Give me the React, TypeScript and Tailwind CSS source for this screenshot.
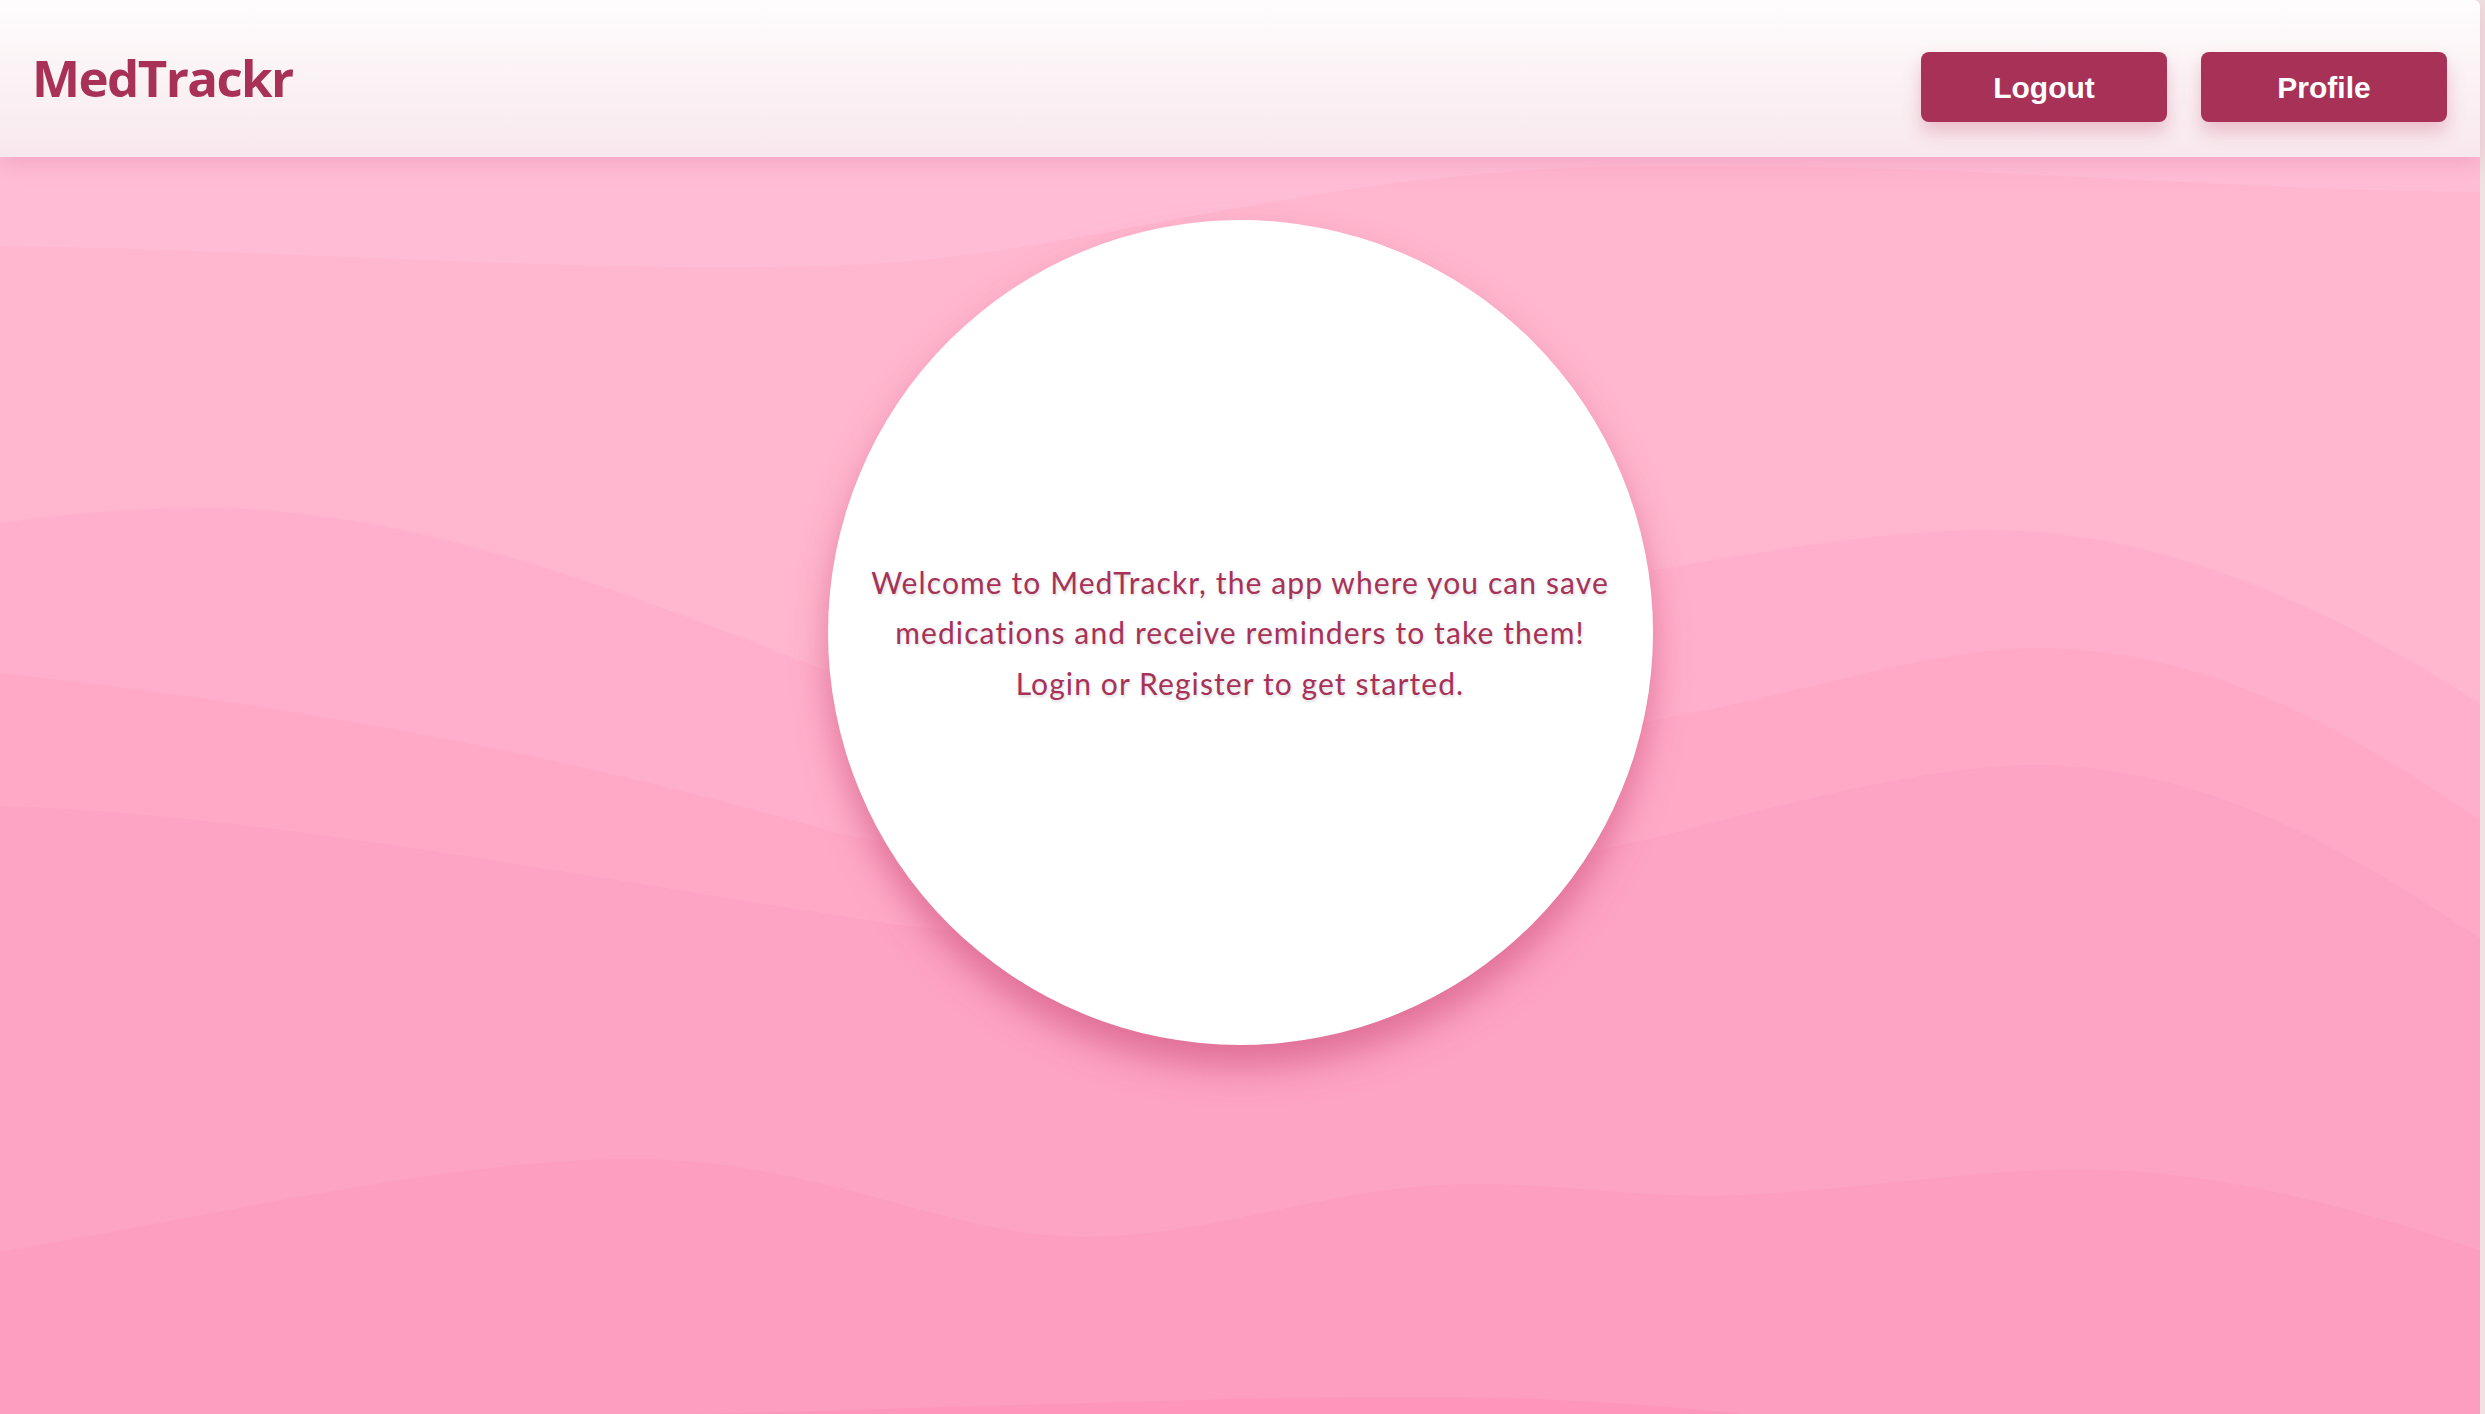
export default function App() {
  return (
    <div className="flex w-full h-[1414px] overflow-hidden bg-[#efe2e2]">
      <div className="flex flex-col w-[2480px] h-full">
        {/* Header */}
        <header className="relative z-10 h-[157px] shrink-0 flex justify-between items-center pl-[32px] pr-[33px] bg-gradient-to-b from-[#fefdfd] to-[#f8e8ed] shadow-[0_6px_22px_rgba(220,120,160,0.35)] rounded-tr-[6px]">
          <h1 className="text-[51px] font-bold text-[#a83257] tracking-[-1.6px] [font-family:'Open_Sans',sans-serif] -mt-[2px]">
            MedTrackr
          </h1>
          <div className="flex gap-[34px] mt-[17px]">
            <button className="w-[246px] h-[70px] rounded-[8px] bg-[#a83257] text-white text-[30px] font-bold [font-family:'Liberation_Sans',Arial,sans-serif] shadow-[0_10px_18px_rgba(200,80,120,0.3)]">
              Logout
            </button>
            <button className="w-[246px] h-[70px] rounded-[8px] bg-[#a83257] text-white text-[30px] font-bold [font-family:'Liberation_Sans',Arial,sans-serif] shadow-[0_10px_18px_rgba(200,80,120,0.3)]">
              Profile
            </button>
          </div>
        </header>

        {/* Main */}
        <main className="relative flex-1 flex justify-center pt-[63px] bg-[#ffbdd5]">
          <svg
            className="absolute inset-0 w-full h-full"
            viewBox="0 157 2480 1257"
            preserveAspectRatio="none"
          >
            <path
              d="M0,246 C300,250 600,275 850,265 C1100,255 1300,168 1650,166 C2000,164 2200,190 2480,192 L2480,1414 L0,1414 Z"
              fill="#ffb6ce"
            />
            <path
              d="M0,523 C80,512 150,507 220,508 C420,512 620,590 830,672 C1100,760 1400,610 1650,571 C1800,545 1900,530 1990,530 C2180,532 2350,620 2480,704 L2480,1414 L0,1414 Z"
              fill="#ffafcb"
            />
            <path
              d="M0,673 C200,695 500,735 830,831 C1100,900 1400,760 1650,721 C1800,695 1930,648 2040,648 C2220,650 2360,740 2480,820 L2480,1414 L0,1414 Z"
              fill="#ffa9c7"
            />
            <path
              d="M0,806 C250,812 600,880 900,925 C1200,960 1450,880 1650,839 C1800,800 1930,765 2040,765 C2220,768 2360,860 2480,938 L2480,1414 L0,1414 Z"
              fill="#fda3c3"
            />
            <path
              d="M0,1252 C220,1215 450,1159 634,1159 C820,1160 950,1237 1082,1237 C1220,1237 1330,1184 1474,1184 C1570,1184 1650,1200 1743,1195 C1880,1188 1980,1168 2092,1170 C2250,1172 2400,1225 2480,1250 L2480,1414 L0,1414 Z"
              fill="#fd9dbf"
            />
            <path
              d="M697,1414 C900,1410 1200,1397 1410,1397 C1560,1397 1650,1405 1743,1414 Z"
              fill="#fd96ba"
            />
          </svg>

          <div className="relative w-[825px] h-[825px] rounded-full bg-white flex items-center justify-center text-center shadow-[0_22px_34px_rgba(200,70,115,0.55)]">
            <p className="text-[30px] leading-[50.5px] tracking-[1.1px] text-[#a83257] [font-family:Lato,sans-serif] [text-shadow:1px_2px_3px_rgba(0,0,0,0.15)]">
              Welcome to MedTrackr, the app where you can save
              <br />
              medications and receive reminders to take them!
              <br />
              Login or Register to get started.
            </p>
          </div>
        </main>
      </div>
      <div className="w-[5px] h-full bg-[#efe2e2]" />
    </div>
  );
}
